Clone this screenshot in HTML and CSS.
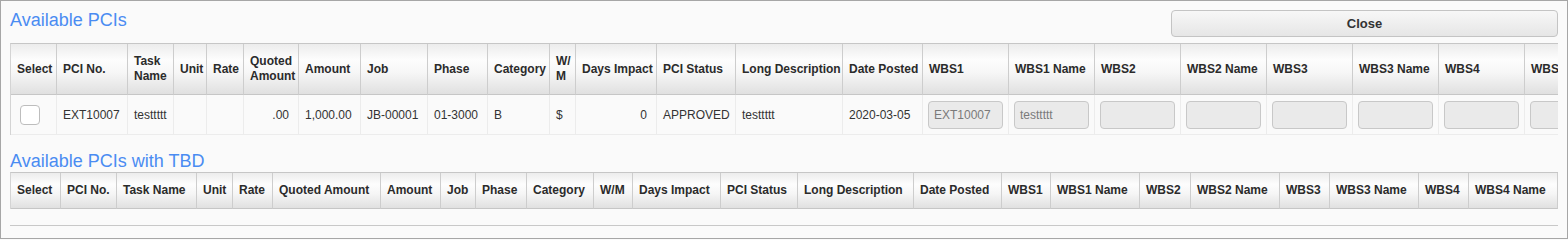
FILE: index.html
```html
<!DOCTYPE html>
<html>
<head>
<meta charset="utf-8">
<title>Available PCIs</title>
<link rel="stylesheet" href="styles.css">
</head>
<body>
<div class="page">
  <div class="top">
    <h2 class="title">Available PCIs</h2>
    <button class="close-btn" type="button">Close</button>
  </div>
  <div class="grid grid1">
    <table class="tbl t1">
      <thead>
        <tr>
          <th>Select</th><th>PCI No.</th><th>Task<br>Name</th><th>Unit</th><th>Rate</th><th>Quoted<br>Amount</th><th>Amount</th><th>Job</th><th>Phase</th><th>Category</th><th>W/<br>M</th><th>Days Impact</th><th>PCI Status</th><th>Long Description</th><th>Date Posted</th><th>WBS1</th><th>WBS1 Name</th><th>WBS2</th><th>WBS2 Name</th><th>WBS3</th><th>WBS3 Name</th><th>WBS4</th><th>WBS4 Name</th>
        </tr>
      </thead>
      <tbody>
        <tr>
          <td class="sel"><span class="check"></span></td>
          <td>EXT10007</td>
          <td>testtttt</td>
          <td></td>
          <td></td>
          <td class="num">.00</td>
          <td class="num">1,000.00</td>
          <td>JB-00001</td>
          <td>01-3000</td>
          <td>B</td>
          <td>$</td>
          <td class="num">0</td>
          <td>APPROVED</td>
          <td>testtttt</td>
          <td>2020-03-05</td>
          <td class="inp"><span class="field">EXT10007</span></td>
          <td class="inp"><span class="field">testtttt</span></td>
          <td class="inp"><span class="field"></span></td>
          <td class="inp"><span class="field"></span></td>
          <td class="inp"><span class="field"></span></td>
          <td class="inp"><span class="field"></span></td>
          <td class="inp"><span class="field"></span></td>
          <td class="inp"><span class="field"></span></td>
        </tr>
      </tbody>
    </table>
  </div>
  <h2 class="title title2">Available PCIs with TBD</h2>
  <div class="grid grid2">
    <table class="tbl t2">
      <thead>
        <tr>
          <th>Select</th><th>PCI No.</th><th>Task Name</th><th>Unit</th><th>Rate</th><th>Quoted Amount</th><th>Amount</th><th>Job</th><th>Phase</th><th>Category</th><th>W/M</th><th>Days Impact</th><th>PCI Status</th><th>Long Description</th><th>Date Posted</th><th>WBS1</th><th>WBS1 Name</th><th>WBS2</th><th>WBS2 Name</th><th>WBS3</th><th>WBS3 Name</th><th>WBS4</th><th>WBS4 Name</th>
        </tr>
      </thead>
    </table>
    <div class="empty-body"></div>
  </div>
</div>
</body>
</html>
```
FILE: styles.css
```css
html, body {
  margin: 0;
  padding: 0;
  background: #fafafa;
}
body {
  font-family: "Liberation Sans", Arial, sans-serif;
  color: #333;
}
.page {
  box-sizing: border-box;
  width: 1568px;
  height: 239px;
  border: 1px solid #a6a6a6;
  padding: 9px 9px 0 9px;
  background: #fafafa;
  overflow: hidden;
}
.top {
  display: flex;
  justify-content: space-between;
  align-items: flex-start;
  height: 33px;
}
.title {
  margin: 0;
  font-size: 18px;
  line-height: 20px;
  font-weight: normal;
  color: #4a8cf2;
}
.title2 {
  margin: 16px 0 1px 0;
}
.close-btn {
  box-sizing: border-box;
  width: 387px;
  height: 27px;
  margin: 0;
  padding: 0;
  border: 1px solid #c4c4c4;
  border-radius: 4px;
  background: linear-gradient(#f7f7f7, #e6e6e6);
  font-family: "Liberation Sans", Arial, sans-serif;
  font-size: 13px;
  font-weight: bold;
  color: #333;
}
.grid1 {
  width: 1548px;
  overflow: hidden;
}
.tbl {
  table-layout: fixed;
  border-collapse: separate;
  border-spacing: 0;
  border-top: 1px solid #c6c6c6;
  border-left: 1px solid #d4d4d4;
}
.tbl th {
  box-sizing: border-box;
  padding: 0 3px 0 6px;
  text-align: left;
  vertical-align: middle;
  font-size: 12px;
  line-height: 15px;
  font-weight: bold;
  color: #2b2b2b;
  white-space: nowrap;
  overflow: hidden;
  border-right: 1px solid #cdcdcd;
  border-bottom: 1px solid #c6c6c6;
  background: linear-gradient(#ececec 0%, #fdfdfd 32%, #f6f6f6 58%, #e0e0e0 100%);
}
.t1 { width: 1600px; }
.t1 th { height: 51px; }
.t1 td {
  box-sizing: border-box;
  height: 40px;
  padding: 0 9px 0 6px;
  font-size: 12px;
  color: #333;
  white-space: nowrap;
  overflow: hidden;
  border-right: 1px solid #ececec;
  border-bottom: 1px solid #ececec;
  background: #fafafa;
}
.t1 td.num { text-align: right; }
.t1 td.sel { padding-left: 9px; }
.t1 td.inp { padding: 0 0 0 5px; }
.check {
  display: block;
  box-sizing: border-box;
  width: 20px;
  height: 20px;
  border: 1px solid #bdbdbd;
  border-radius: 4px;
  background: #fff;
}
.field {
  display: block;
  box-sizing: border-box;
  width: 75px;
  height: 28px;
  border: 1px solid #c8c8c8;
  border-radius: 4px;
  background: #eaeaea;
  padding-left: 5px;
  line-height: 26px;
  font-size: 12px;
  color: #7a7a7a;
  overflow: hidden;
}

.t1 th:nth-child(1) { width: 46px; }
.t1 th:nth-child(2) { width: 71px; }
.t1 th:nth-child(3) { width: 46px; }
.t1 th:nth-child(4) { width: 33px; }
.t1 th:nth-child(5) { width: 37px; }
.t1 th:nth-child(6) { width: 55px; }
.t1 th:nth-child(7) { width: 62px; }
.t1 th:nth-child(8) { width: 67px; }
.t1 th:nth-child(9) { width: 60px; }
.t1 th:nth-child(10) { width: 62px; }
.t1 th:nth-child(11) { width: 26px; }
.t1 th:nth-child(12) { width: 81px; }
.t1 th:nth-child(13) { width: 79px; }
.t1 th:nth-child(14) { width: 107px; }
.t1 th:nth-child(15) { width: 80px; }
.t1 th:nth-child(n+16) { width: 86px; }

.grid2 {
  width: 1548px;
  border-bottom: 1px solid #c8c8c8;
}
.t2 { width: 1548px; }
.t2 th { height: 36px; }
.empty-body { height: 16px; }

.t2 th:nth-child(1) { width: 50px; }
.t2 th:nth-child(2) { width: 56px; }
.t2 th:nth-child(3) { width: 80px; }
.t2 th:nth-child(4) { width: 36px; }
.t2 th:nth-child(5) { width: 40px; }
.t2 th:nth-child(6) { width: 108px; }
.t2 th:nth-child(7) { width: 60px; }
.t2 th:nth-child(8) { width: 35px; }
.t2 th:nth-child(9) { width: 51px; }
.t2 th:nth-child(10) { width: 67px; }
.t2 th:nth-child(11) { width: 39px; }
.t2 th:nth-child(12) { width: 88px; }
.t2 th:nth-child(13) { width: 77px; }
.t2 th:nth-child(14) { width: 116px; }
.t2 th:nth-child(15) { width: 88px; }
.t2 th:nth-child(16) { width: 49px; }
.t2 th:nth-child(17) { width: 89px; }
.t2 th:nth-child(18) { width: 51px; }
.t2 th:nth-child(19) { width: 89px; }
.t2 th:nth-child(20) { width: 50px; }
.t2 th:nth-child(21) { width: 89px; }
.t2 th:nth-child(22) { width: 50px; }
.t2 th:nth-child(23) { width: 89px; }
```
